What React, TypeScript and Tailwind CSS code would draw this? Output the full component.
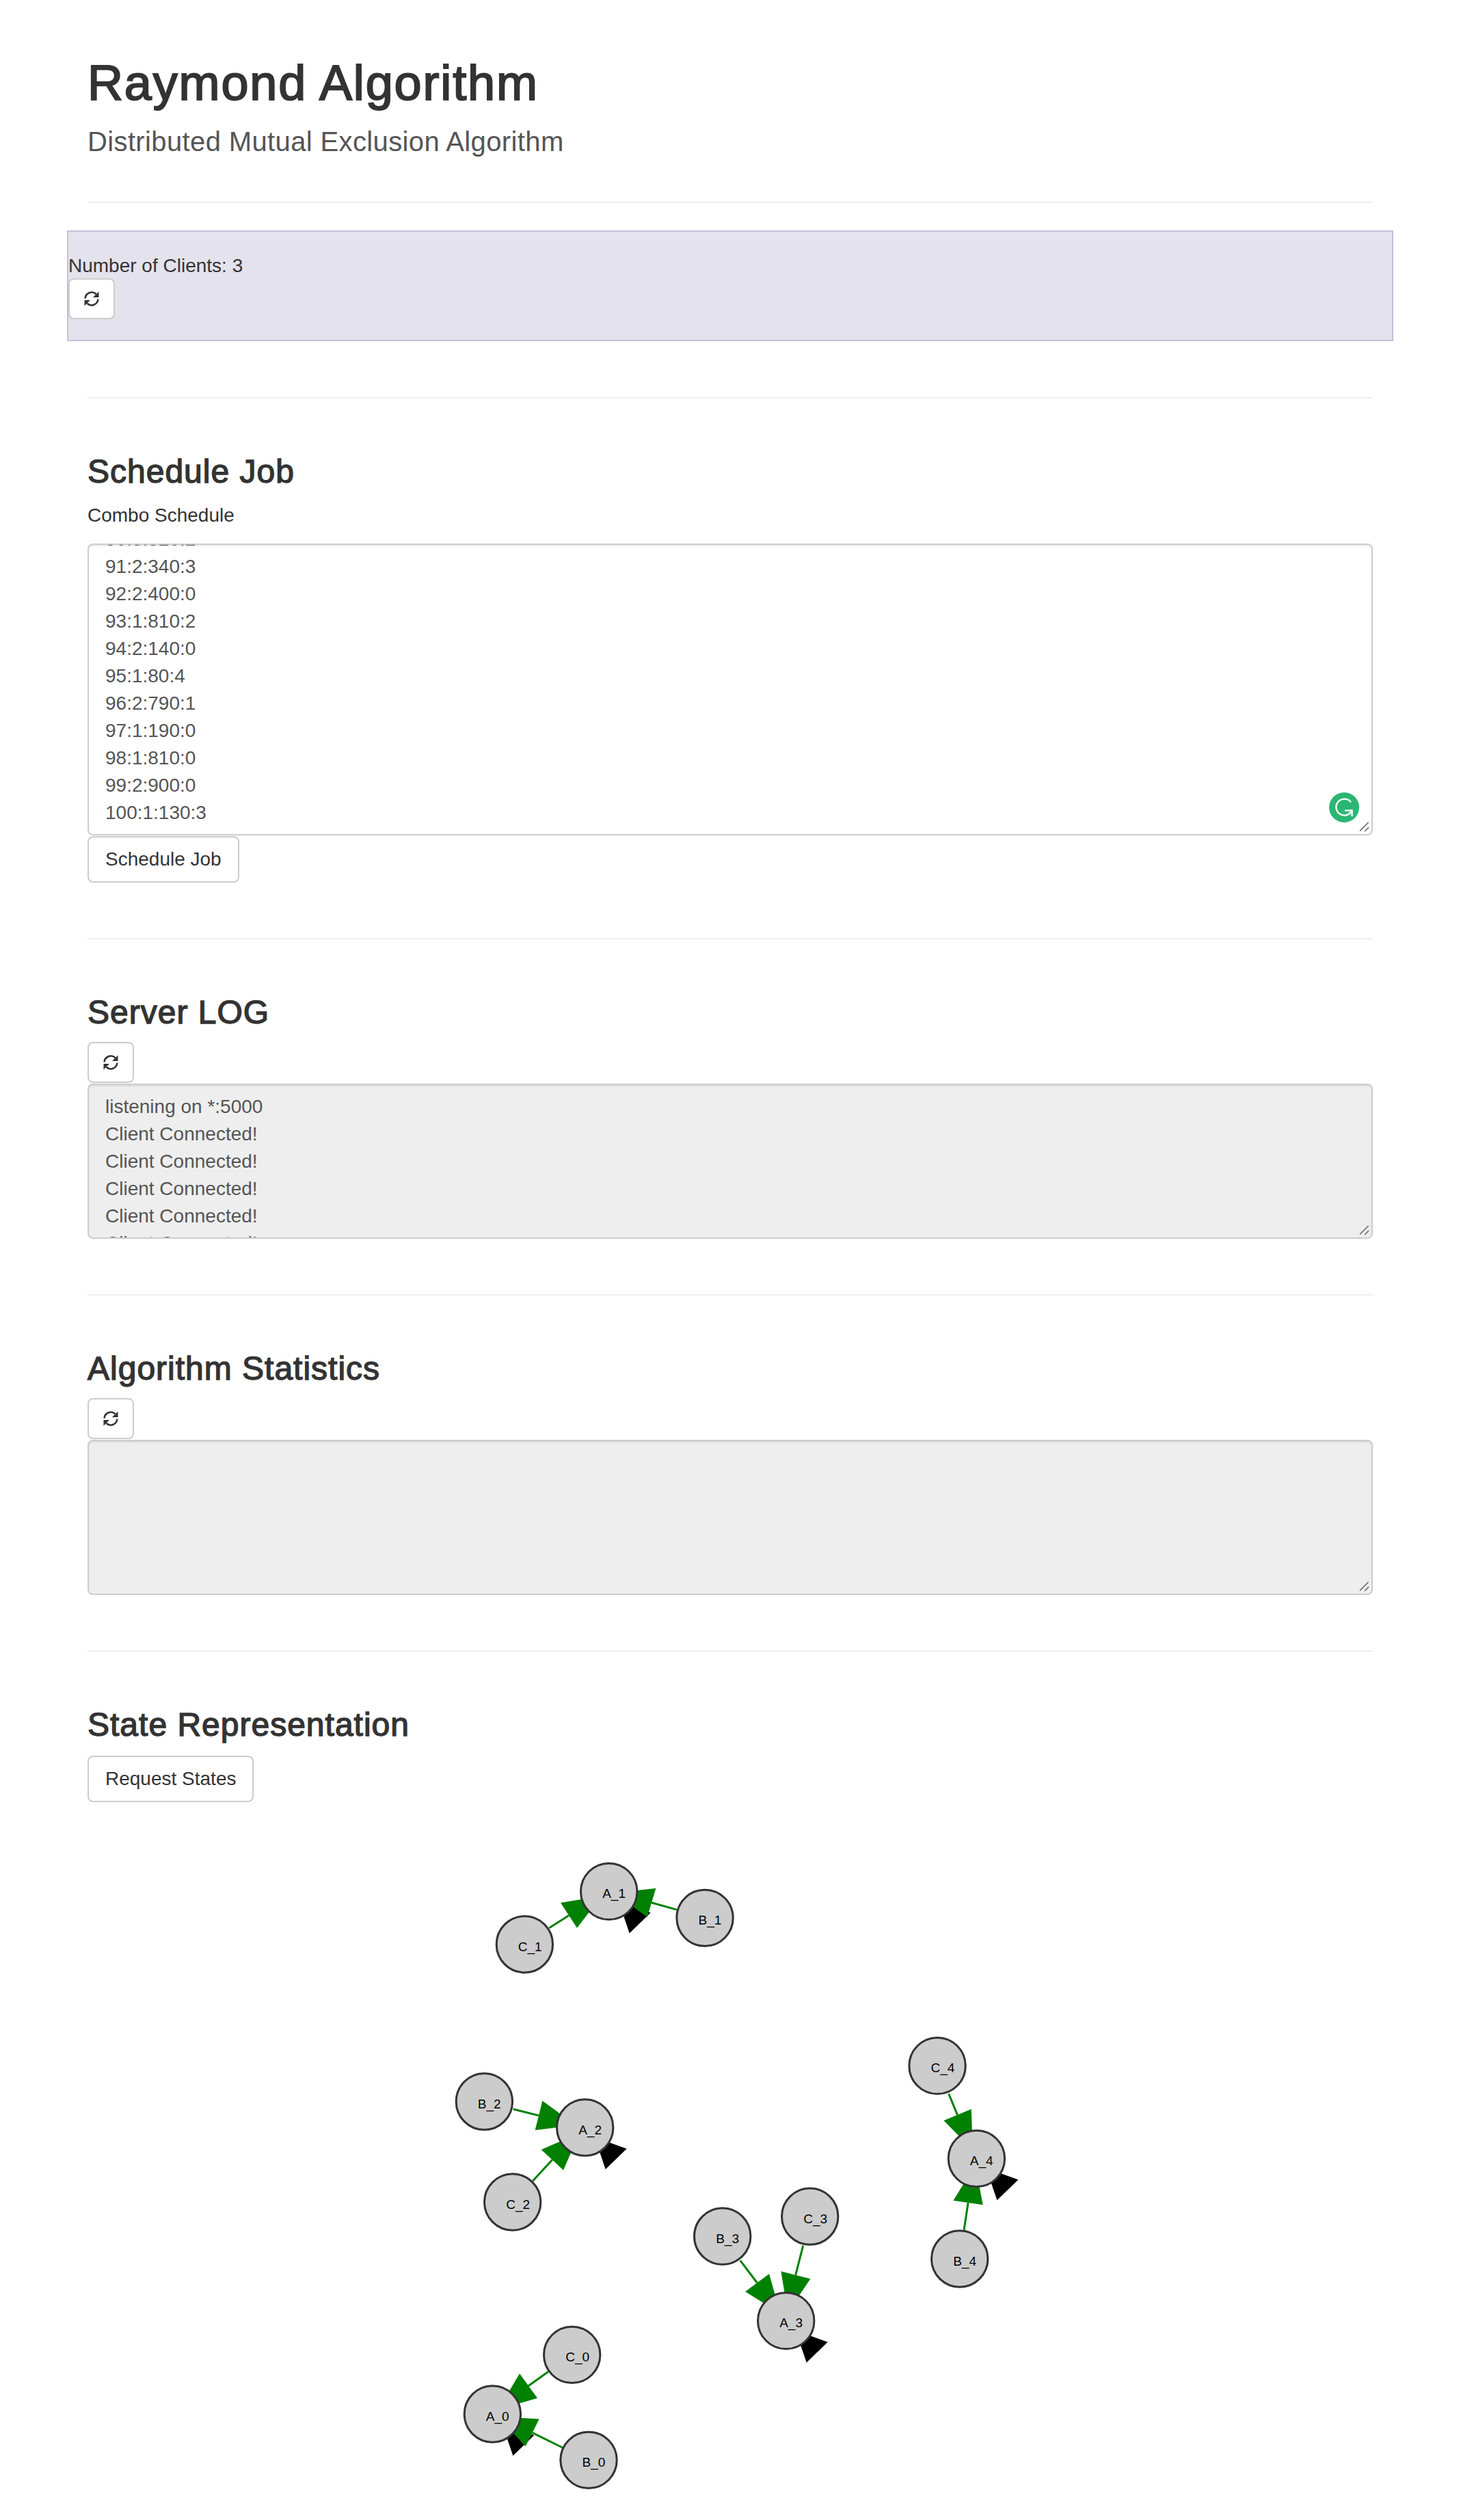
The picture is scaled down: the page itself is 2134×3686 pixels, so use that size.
import React from "react";

type Pt = [number, number];
type Arrow = { base: [Pt, Pt]; line: [Pt, Pt] };
type Group = {
  origin: Pt;
  nodes: { label: string; c: Pt }[];
  arrows: Arrow[];
};

const groups: Group[] = [
  {
    origin: [640, 2680],
    nodes: [
      { label: "A_1", c: [752, 257] },
      { label: "C_1", c: [382, 489] },
      { label: "B_1", c: [1173, 373] },
    ],
    arrows: [
      { base: [[540, 307], [612, 417]], line: [[490, 417], [576, 362]] },
      { base: [[958, 243], [920, 370]], line: [[1050, 337], [939, 306]] },
    ],
  },
  {
    origin: [620, 3000],
    nodes: [
      { label: "A_2", c: [707, 333] },
      { label: "B_2", c: [265, 219] },
      { label: "C_2", c: [389, 660] },
    ],
    arrows: [
      { base: [[520, 215], [488, 344]], line: [[392, 252], [504, 280]] },
      { base: [[515, 430], [612, 520]], line: [[478, 567], [563, 475]] },
    ],
  },
  {
    origin: [1000, 3180],
    nodes: [
      { label: "A_3", c: [449, 641] },
      { label: "B_3", c: [170, 270] },
      { label: "C_3", c: [554, 183] },
    ],
    arrows: [
      { base: [[375, 435], [270, 513]], line: [[248, 376], [322, 474]] },
      { base: [[427, 424], [556, 457]], line: [[524, 311], [491, 440]] },
    ],
  },
  {
    origin: [1300, 2960],
    nodes: [
      { label: "A_4", c: [385, 589] },
      { label: "C_4", c: [213, 182] },
      { label: "B_4", c: [311, 1029] },
    ],
    arrows: [
      { base: [[362, 372], [241, 422]], line: [[263, 305], [301, 397]] },
      { base: [[283, 773], [413, 792]], line: [[330, 902], [348, 783]] },
    ],
  },
  {
    origin: [660, 3380],
    nodes: [
      { label: "A_0", c: [181, 450] },
      { label: "C_0", c: [530, 190] },
      { label: "B_0", c: [603, 652] },
    ],
    arrows: [
      { base: [[300, 272], [378, 380]], line: [[425, 265], [339, 326]] },
      { base: [[386, 472], [326, 592]], line: [[488, 597], [356, 532]] },
    ],
  },
];

function Graph() {
  const map = (o: Pt, p: Pt): Pt => [o[0] + p[0] / 3, o[1] + p[1] / 3];
  return (
    <svg viewBox="128 2640 1880 1046" className="block h-[1046px] w-[1880px]">
      {groups.map((g) => {
        const a = map(g.origin, g.nodes[0].c);
        return (
          <g key={g.nodes[0].label}>
            <polygon
              points={`${a[0] + 14},${a[1] + 14} ${a[0] + 61},${a[1] + 31} ${a[0] + 30},${a[1] + 61}`}
              fill="#000"
            />
            {g.arrows.map((ar, i) => {
              const l1 = map(g.origin, ar.line[0]);
              const l2 = map(g.origin, ar.line[1]);
              const b1 = map(g.origin, ar.base[0]);
              const b2 = map(g.origin, ar.base[1]);
              const mx = (b1[0] + b2[0]) / 2;
              const my = (b1[1] + b2[1]) / 2;
              const dx = a[0] - mx;
              const dy = a[1] - my;
              const d = Math.hypot(dx, dy);
              const tip: Pt = [mx + (dx / d) * 56, my + (dy / d) * 56];
              return (
                <g key={i}>
                  <line x1={l1[0]} y1={l1[1]} x2={l2[0]} y2={l2[1]} stroke="#008000" strokeWidth={3} />
                  <polygon points={`${b1[0]},${b1[1]} ${b2[0]},${b2[1]} ${tip[0]},${tip[1]}`} fill="#008000" />
                </g>
              );
            })}
            {g.nodes.map((n) => {
              const c = map(g.origin, n.c);
              return (
                <g key={n.label}>
                  <circle cx={c[0]} cy={c[1]} r={41.2} fill="#cccccc" stroke="#333333" strokeWidth={3} />
                  <text
                    x={c[0] - 9.5}
                    y={c[1] + 9.5}
                    fontSize={19}
                    fill="#000"
                    fontFamily="'Liberation Sans', Arial, sans-serif"
                  >
                    {n.label}
                  </text>
                </g>
              );
            })}
          </g>
        );
      })}
    </svg>
  );
}

function RefreshIcon() {
  return (
    <svg viewBox="0 0 24 24" className="h-6 w-6" fill="none">
      <path d="M2.6 11.5A9.5 9.5 0 0 1 18.6 5.2" stroke="#333" strokeWidth={2.6} />
      <polygon points="22.5,1.5 22.5,10 14,10" fill="#333" />
      <path d="M21.4 12.5A9.5 9.5 0 0 1 5.4 18.8" stroke="#333" strokeWidth={2.6} />
      <polygon points="1.5,22.5 1.5,14 10,14" fill="#333" />
    </svg>
  );
}

function RefreshButton() {
  return (
    <button className="flex h-[60px] w-[68px] items-center justify-center rounded-lg border-2 border-[#cccccc] bg-white">
      <RefreshIcon />
    </button>
  );
}

function TextButton({ children }: { children: React.ReactNode }) {
  return (
    <button className="block h-[68px] rounded-lg border-2 border-[#cccccc] bg-white px-6 text-[28px] leading-10 text-[#333333]">
      {children}
    </button>
  );
}

function ResizeHandle() {
  return (
    <svg viewBox="0 0 20 20" className="absolute right-0 bottom-0 h-5 w-5">
      <line x1="3" y1="15.5" x2="15.5" y2="3" stroke="#666" strokeWidth={1.6} />
      <line x1="10" y1="16" x2="16" y2="10" stroke="#666" strokeWidth={1.6} />
    </svg>
  );
}

function GrammarlyIcon() {
  return (
    <svg viewBox="0 0 44 44" className="absolute right-[18px] bottom-[17px] h-11 w-11" fill="none">
      <circle cx="22" cy="22" r="22" fill="#2bb673" />
      <path d="M32 14.5A12 12 0 1 0 32.5 28" stroke="#fff" strokeWidth={2.4} />
      <path d="M23 26.5H33.5V35" stroke="#fff" strokeWidth={2.4} />
    </svg>
  );
}

const Hr = ({ className }: { className: string }) => <hr className={`border-0 h-0.5 bg-[#eeeeee] ${className}`} />;

const H2 = ({ children }: { children: React.ReactNode }) => (
  <h2 className="text-[48px] leading-[53px] tracking-[1px] text-[#333333] [-webkit-text-stroke:1.4px_#333333]">{children}</h2>
);

const schedule = [
  "90:3:320:2",
  "91:2:340:3",
  "92:2:400:0",
  "93:1:810:2",
  "94:2:140:0",
  "95:1:80:4",
  "96:2:790:1",
  "97:1:190:0",
  "98:1:810:0",
  "99:2:900:0",
  "100:1:130:3",
];

const logLines = [
  "listening on *:5000",
  "Client Connected!",
  "Client Connected!",
  "Client Connected!",
  "Client Connected!",
  "Client Connected!",
];

export default function App() {
  return (
    <div className="h-[3686px] overflow-hidden bg-white pr-[126px] pl-[128px] pt-[82px] font-['Liberation_Sans',Arial,sans-serif] text-[28px] leading-10 text-[#333333]">
      <h1 className="text-[72px] leading-[79px] tracking-[1.85px] text-[#333333] [-webkit-text-stroke:2px_#333333]">Raymond Algorithm</h1>
      <p className="mt-6 text-[40px] leading-[44px] tracking-[0.37px] text-[#555555]">Distributed Mutual Exclusion Algorithm</p>
      <Hr className="mt-[66px]" />

      <div className="-mx-[30px] mt-10 h-[162px] border-2 border-[#c4c0d8] bg-[#e4e2ec] pt-[30px]">
        <div className="h-[38px]">Number of Clients: 3</div>
        <RefreshButton />
      </div>
      <Hr className="mt-[82px]" />

      <section className="mt-20">
        <H2>Schedule Job</H2>
        <div className="mt-[18px]">Combo Schedule</div>
        <div className="relative mt-[21px] flex h-[427px] flex-col justify-end overflow-hidden rounded-lg border-2 border-[#cccccc] bg-white px-6 pb-[11px] text-[#555555] shadow-[inset_0_2px_2px_rgba(0,0,0,0.075)]">
          {schedule.map((line) => (
            <div key={line} className="shrink-0">{line}</div>
          ))}
          <GrammarlyIcon />
          <ResizeHandle />
        </div>
        <div className="mt-px">
          <TextButton>Schedule Job</TextButton>
        </div>
      </section>
      <Hr className="mt-[81px]" />

      <section className="mt-20">
        <H2>Server LOG</H2>
        <div className="mt-[17px]">
          <RefreshButton />
        </div>
        <div className="relative mt-px h-[227px] overflow-hidden rounded-lg border-2 border-[#cccccc] bg-[#eeeeee] px-6 pt-3 text-[#555555] shadow-[inset_0_2px_2px_rgba(0,0,0,0.075)]">
          {logLines.map((line, i) => (
            <div key={i}>{line}</div>
          ))}
          <ResizeHandle />
        </div>
      </section>
      <Hr className="mt-[81px]" />

      <section className="mt-20">
        <H2>Algorithm Statistics</H2>
        <div className="mt-[17px]">
          <RefreshButton />
        </div>
        <div className="relative mt-px h-[227px] overflow-hidden rounded-lg border-2 border-[#cccccc] bg-[#eeeeee] shadow-[inset_0_2px_2px_rgba(0,0,0,0.075)]">
          <ResizeHandle />
        </div>
      </section>
      <Hr className="mt-[81px]" />

      <section className="mt-20">
        <H2>State Representation</H2>
        <div className="mt-[19px]">
          <TextButton>Request States</TextButton>
        </div>
        <div className="mt-[5px]">
          <Graph />
        </div>
      </section>
    </div>
  );
}
